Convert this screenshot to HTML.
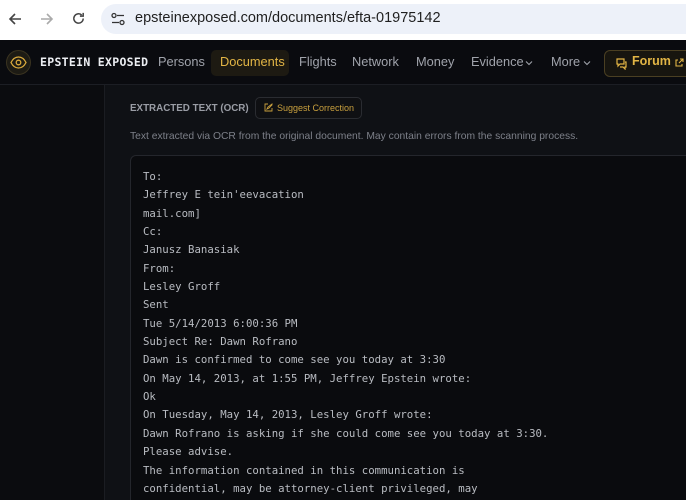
<!DOCTYPE html>
<html><head><meta charset="utf-8"><style>
*{margin:0;padding:0;box-sizing:border-box}
html,body{width:686px;height:500px;overflow:hidden}
body{background:#0f1115;font-family:"Liberation Sans",sans-serif;position:relative}
.top{position:absolute;left:0;top:0;width:686px;height:40px;background:#fff}
.url{position:absolute;left:101px;top:4px;width:600px;height:30px;border-radius:15px;background:#edf1f9}
.url span{position:absolute;left:34px;top:6px;font-size:14.5px;color:#1f1f1f}
.nav{position:absolute;left:0;top:40px;width:686px;height:45px;background:#0a0b0f;border-bottom:1px solid #1c1e24}
.nav .it{position:absolute;top:14px;font-size:12.8px;color:#a0a3ab;white-space:nowrap}
.side{position:absolute;left:0;top:85px;width:105px;height:415px;background:#0b0c0f;border-right:1px solid #1b1d22}
.mono{font-family:"DejaVu Sans Mono","Liberation Mono",monospace}
.box{position:absolute;left:130px;top:155px;width:570px;height:360px;background:#0a0b0e;border:1px solid #24262c;border-radius:6px}
.box pre{position:absolute;left:12px;top:12px;font-size:10.7px;line-height:18.35px;color:#b9bcc2}
</style></head><body>
<div class="top">
<svg style="position:absolute;left:8px;top:12px" width="14" height="14" viewBox="0 0 14 14"><path d="M13 7H2M7 2L2 7l5 5" stroke="#444" stroke-width="1.6" fill="none"/></svg>
<svg style="position:absolute;left:40px;top:12px" width="14" height="14" viewBox="0 0 14 14"><path d="M1 7h11M7 2l5 5-5 5" stroke="#aaa" stroke-width="1.6" fill="none"/></svg>
<svg style="position:absolute;left:71px;top:11px" width="15" height="15" viewBox="0 0 16 16"><path d="M13 8a5 5 0 1 1-1.6-3.7M13 2v3.5H9.5" stroke="#444" stroke-width="1.6" fill="none"/></svg>
<div class="url">
<svg style="position:absolute;left:10px;top:8px" width="14" height="14" viewBox="0 0 14 14"><circle cx="3" cy="3.5" r="2" fill="none" stroke="#333" stroke-width="1.3"/><path d="M6 3.5h7M1 10.5h7" stroke="#333" stroke-width="1.3"/><circle cx="11" cy="10.5" r="2" fill="none" stroke="#333" stroke-width="1.3"/></svg>
<span>epsteinexposed.com/documents/efta-01975142</span></div>
</div>
<div class="nav">
<div style="position:absolute;left:6px;top:10px;width:25px;height:25px;border-radius:50%;background:#1d1b14;border:1px solid #3a3320"></div>
<svg style="position:absolute;left:10px;top:16px" width="17" height="13" viewBox="0 0 17 13"><path d="M1 6.5C3 2.5 6 1 8.5 1S14 2.5 16 6.5C14 10.5 11 12 8.5 12S3 10.5 1 6.5Z" fill="none" stroke="#d9a93c" stroke-width="1.3"/><circle cx="8.5" cy="6.5" r="2.3" fill="none" stroke="#d9a93c" stroke-width="1.3"/></svg>
<div class="mono" style="position:absolute;left:40px;top:15px;font-size:11.5px;font-weight:bold;color:#eceef2;letter-spacing:0.3px">EPSTEIN EXPOSED</div>
<div class="it" style="left:158px">Persons</div>
<div style="position:absolute;left:211px;top:10px;width:78px;height:26px;border-radius:5px;background:#1d1a12"></div>
<div class="it" style="left:220px;color:#e2b545">Documents</div>
<div class="it" style="left:299px">Flights</div>
<div class="it" style="left:352px">Network</div>
<div class="it" style="left:416px">Money</div>
<div class="it" style="left:471px">Evidence</div>
<svg style="position:absolute;left:525px;top:20px" width="8" height="6" viewBox="0 0 8 6"><path d="M1 1.5l3 3 3-3" stroke="#a0a3ab" stroke-width="1.1" fill="none"/></svg>
<div class="it" style="left:551px">More</div>
<svg style="position:absolute;left:583px;top:20px" width="8" height="6" viewBox="0 0 8 6"><path d="M1 1.5l3 3 3-3" stroke="#a0a3ab" stroke-width="1.1" fill="none"/></svg>
<div style="position:absolute;left:604px;top:10px;width:100px;height:27px;border-radius:6px;background:#17150f;border:1px solid #4a3f22"></div>
<svg style="position:absolute;left:615px;top:17px" width="13" height="13" viewBox="0 0 13 13"><path d="M2 2h7v5H5l-2 2V7H2z M10 5h1v5h-1v2l-2-2H5" fill="none" stroke="#e2b545" stroke-width="1.2"/></svg>
<div class="it" style="left:632px;color:#e2b545;font-weight:bold;font-size:12.5px">Forum</div>
<svg style="position:absolute;left:674px;top:18px" width="10" height="10" viewBox="0 0 10 10"><path d="M4 2H2v6h6V6M6 1h3v3M9 1L5 5" fill="none" stroke="#e2b545" stroke-width="1.1"/></svg>
</div>
<div class="side"></div>
<div style="position:absolute;left:130px;top:103px;font-size:9.8px;font-weight:bold;color:#9a9da5">EXTRACTED TEXT (OCR)</div>
<div style="position:absolute;left:255px;top:97px;width:107px;height:22px;border:1px solid #2a2c31;border-radius:5px;background:#0f1013"></div>
<svg style="position:absolute;left:264px;top:103px" width="9" height="9" viewBox="0 0 9 9"><path d="M4 1H1v7h7V5M3 6l1-2 4-3 0 1-3 3z" fill="none" stroke="#c9a03e" stroke-width="0.9"/></svg>
<div style="position:absolute;left:277px;top:103px;font-size:9px;color:#c9a03e">Suggest Correction</div>
<div style="position:absolute;left:130px;top:131px;font-size:10.3px;color:#7d8089">Text extracted via OCR from the original document. May contain errors from the scanning process.</div>
<div class="box"><pre class="mono">To:
Jeffrey E tein'eevacation
mail.com]
Cc:
Janusz Banasiak
From:
Lesley Groff
Sent
Tue 5/14/2013 6:00:36 PM
Subject Re: Dawn Rofrano
Dawn is confirmed to come see you today at 3:30
On May 14, 2013, at 1:55 PM, Jeffrey Epstein wrote:
Ok
On Tuesday, May 14, 2013, Lesley Groff wrote:
Dawn Rofrano is asking if she could come see you today at 3:30.
Please advise.
The information contained in this communication is
confidential, may be attorney-client privileged, may</pre></div>
</body></html>
